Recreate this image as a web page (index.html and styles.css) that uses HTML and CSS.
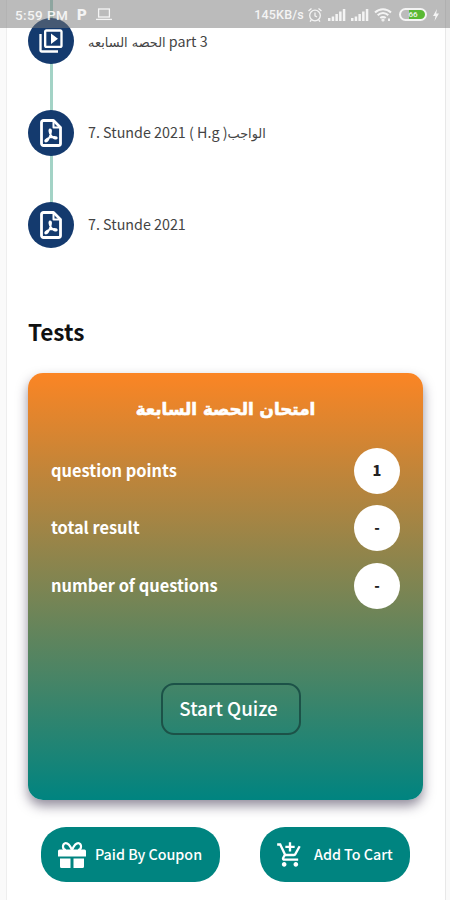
FILE: index.html
```html
<!DOCTYPE html>
<html lang="en">
<head>
    <meta charset="UTF-8">
    <meta name="viewport" content="width=device-width, initial-scale=1">
    <title>7. Stunde 2021</title>
    <link rel="stylesheet" href="styles.css">
</head>
<body>
<header class="status-bar">
    <span class="time">5:59 PM</span>
    <span class="p-icon">P</span>
    <svg class="laptop" width="16" height="13" viewBox="0 0 16 13" fill="none" stroke="#fff" stroke-width="1.3">
        <rect x="2.6" y="1" width="10.8" height="8"/>
        <path d="M0 11.4h16"/>
    </svg>
    <span class="speed">145KB/s</span>
    <svg width="16" height="16" viewBox="0 0 16 16" fill="none" stroke="#fff" stroke-width="1.3">
        <circle cx="8" cy="8.5" r="5.3"/>
        <path d="M8 5.5v3.3l2 1.2M1.5 4l3-2.6M14.5 4l-3-2.6M4.3 13l-1.3 1.7M11.7 13l1.3 1.7"/>
    </svg>
    <svg class="signal" width="18" height="13" viewBox="0 0 18 13" fill="#fff">
        <path d="M0 10h2.5v3H0zM3.7 8.5h2.5V13H3.7zM7.4 6h2.5v7H7.4zM11.1 3.5h2.5V13h-2.5zM14.8 1h2.5v12h-2.5z"/>
    </svg>
    <svg class="signal" width="18" height="13" viewBox="0 0 18 13" fill="#fff">
        <path d="M0 10h2.5v3H0zM3.7 8.5h2.5V13H3.7zM7.4 6h2.5v7H7.4zM11.1 3.5h2.5V13h-2.5zM14.8 1h2.5v12h-2.5z"/>
    </svg>
    <svg class="wifi" width="18" height="15" viewBox="0 0 18 15" fill="none" stroke="#fff" stroke-width="2">
        <path d="M1 5.5c4.5-4.5 11.5-4.5 16 0M3.7 8.3c3-3 7.6-3 10.6 0M6.3 11c1.5-1.5 3.9-1.5 5.4 0"/>
        <circle cx="9" cy="13" r=".6"/>
        <path d="M15 11.5v2.5"/>
    </svg>
    <span class="battery"><span>66</span></span>
    <svg width="6" height="12" viewBox="0 0 6 12" fill="#fff">
        <path d="M4 0 0 7h2.5L1.5 12 6 4.5H3.2z"/>
    </svg>
</header>

<main>
    <ul class="lessons">
        <li>
            <span class="bullet">
                <svg width="28" height="28" viewBox="0 0 24 24" fill="#fff">
                    <path d="M4 6H2v14c0 1.1.9 2 2 2h14v-2H4V6zm16-4H8c-1.1 0-2 .9-2 2v12c0 1.1.9 2 2 2h12c1.1 0 2-.9 2-2V4c0-1.1-.9-2-2-2zm0 14H8V4h12v12zM12 5.5v9l6-4.5z"/>
                </svg>
            </span>
            <p><span class="ar">الحصه السابعه</span> part 3</p>
        </li>
        <li>
            <span class="bullet">
                <svg width="22" height="28" viewBox="0 0 22 28" fill="none" stroke="#fff" stroke-linejoin="round">
                    <path stroke-width="2.8" d="M3.5 1.5h10l7 7v16a2 2 0 0 1-2 2h-15a2 2 0 0 1-2-2v-21a2 2 0 0 1 2-2z"/>
                    <path stroke-width="2" d="M13.5 2v6.5H20"/>
                    <path stroke-width="1.8" d="M10 10.5c1.8 0 .8 3.5.3 5.5-1 3-2.8 6.5-4.5 6.5-1.5 0-.5-2.5 4-4 3-.9 7-1 7 .5 0 1.6-4.3.2-6-3-1.2-2-2-5.5-.8-5.5z"/>
                </svg>
            </span>
            <p>7. Stunde 2021 ( H.g )<span class="ar">الواجب</span></p>
        </li>
        <li>
            <span class="bullet">
                <svg width="22" height="28" viewBox="0 0 22 28" fill="none" stroke="#fff" stroke-linejoin="round">
                    <path stroke-width="2.8" d="M3.5 1.5h10l7 7v16a2 2 0 0 1-2 2h-15a2 2 0 0 1-2-2v-21a2 2 0 0 1 2-2z"/>
                    <path stroke-width="2" d="M13.5 2v6.5H20"/>
                    <path stroke-width="1.8" d="M10 10.5c1.8 0 .8 3.5.3 5.5-1 3-2.8 6.5-4.5 6.5-1.5 0-.5-2.5 4-4 3-.9 7-1 7 .5 0 1.6-4.3.2-6-3-1.2-2-2-5.5-.8-5.5z"/>
                </svg>
            </span>
            <p>7. Stunde 2021</p>
        </li>
    </ul>

    <h2>Tests</h2>
    <section class="quiz-card">
        <h3 dir="rtl">امتحان الحصة السابعة</h3>
        <div class="quiz-row"><span>question points</span><b>1</b></div>
        <div class="quiz-row"><span>total result</span><b>-</b></div>
        <div class="quiz-row"><span>number of questions</span><b>-</b></div>
        <button class="start">Start Quize</button>
    </section>

    <div class="actions">
        <button class="coupon">
            <svg width="28" height="26" viewBox="0 0 28 26" fill="#fff">
                <path d="M1.5 7.5h25q1.5 0 1.5 1.5v5.5H0V9q0-1.5 1.5-1.5zM2 16.5h10.5V26H3.5Q2 26 2 24.5zM15.5 16.5H26v8q0 1.5-1.5 1.5h-9z"/>
                <path fill="none" stroke="#fff" stroke-width="2.2" d="M14 8C12 3.5 10 1.2 7.8 1.2 4 1.2 4 8 8 8M14 8c2-4.5 4-6.8 6.2-6.8C24 1.2 24 8 20 8"/>
            </svg>
            <span>Paid By Coupon</span>
        </button>
        <button class="cart">
            <svg width="28" height="28" viewBox="0 0 24 24" fill="#fff">
                <path d="M11 9h2V6h3V4h-3V1h-2v3H8v2h3v3zm-4 9c-1.1 0-1.99.9-1.99 2S5.9 22 7 22s2-.9 2-2-.9-2-2-2zm10 0c-1.1 0-1.99.9-1.99 2s.89 2 1.99 2 2-.9 2-2-.9-2-2-2zm-9.83-3.25l.03-.12.9-1.63h7.45c.75 0 1.41-.41 1.75-1.03l3.86-7.01L19.42 4h-.01l-1.1 2-2.76 5H8.53l-.13-.27L6.16 6l-.95-2-.94-2H1v2h2l3.6 7.59-1.35 2.45c-.16.28-.25.61-.25.96 0 1.1.9 2 2 2h12v-2H7.42c-.13 0-.25-.11-.25-.25z"/>
            </svg>
            <span>Add To Cart</span>
        </button>
    </div>
</main>
</body>
</html>
```

FILE: styles.css
```css
* {
    box-sizing: border-box;
}
body {
    margin: 0;
    height: 900px;
    overflow: hidden;
    background: #fafafa;
    color: #444;
    font-family: "Noto Sans CJK SC", "DejaVu Sans", sans-serif;
}
h2, h3, p, ul {
    margin: 0;
    padding: 0;
}
button {
    font-family: inherit;
    color: #fff;
    padding: 0;
}
svg {
    display: block;
    flex: none;
}

/* phone status bar, sits over the scrolled page */
.status-bar {
    position: absolute;
    z-index: 2;
    top: 0;
    left: 0;
    width: 450px;
    height: 28px;
    padding: 1px 11px 0 15px;
    display: flex;
    align-items: center;
    background: rgba(120, 120, 120, 0.5);
    color: #fff;
    font-family: Roboto, sans-serif;
    font-size: 13.5px;
    font-weight: 500;
}
.status-bar > * {
    opacity: 0.85;
}
.time {
    width: 62px;
    letter-spacing: 0.4px;
}
.p-icon {
    width: 19px;
    font-size: 15px;
    font-weight: 900;
}
.speed {
    margin-left: auto;
    margin-right: 3px;
    font-size: 12.5px;
    letter-spacing: 0.2px;
}
.signal {
    margin-left: 5px;
}
.wifi {
    margin-left: 5px;
}
.battery {
    width: 28px;
    height: 13px;
    margin: 0 6px 0 7px;
    border: 2px solid #fff;
    border-radius: 7px;
    background: linear-gradient(to right, #bcbcbc 35%, #48b91c 35%);
    display: flex;
    align-items: center;
    justify-content: center;
    font-size: 8px;
}

main {
    height: 900px;
    margin: 0 4px 0 6px;
    padding: 0 22px 0 21px;
    background: #fff;
    border-left: 1px solid #eee;
    border-right: 1px solid #e8e8e8;
}

.lessons {
    list-style: none;
    height: 230px;
    padding-top: 18px;
    background: linear-gradient(#a3d3c6, #a3d3c6) 22px 0 / 3px 220px no-repeat;
}
.lessons li {
    display: flex;
    align-items: center;
    gap: 14px;
    height: 46px;
    margin-bottom: 45.8px;
}
.bullet {
    width: 46px;
    height: 46px;
    border-radius: 50%;
    background: #143a6e;
    display: flex;
    align-items: center;
    justify-content: center;
}
.lessons p {
    padding-bottom: 2px;
    font-size: 14.3px;
    white-space: nowrap;
}
.ar {
    font-family: "DejaVu Sans", sans-serif;
    font-size: 12.9px;
}

h2 {
    margin-top: 84px;
    font-size: 22.6px;
    line-height: 36px;
    color: #111;
}

.quiz-card {
    height: 427px;
    margin-top: 23px;
    padding: 24px 23px 0;
    border-radius: 15px;
    background: linear-gradient(#fb8524, #008480);
    box-shadow: 0 6px 12px rgba(40, 30, 60, 0.5);
    color: #fff;
}
.quiz-card h3 {
    height: 51px;
    line-height: 24px;
    text-align: center;
    font-family: "DejaVu Sans", sans-serif;
    font-size: 16.8px;
    -webkit-text-stroke: 0.6px #fff;
}
.quiz-row {
    display: flex;
    align-items: center;
    justify-content: space-between;
    height: 46px;
    margin-bottom: 11.3px;
    font-size: 16.4px;
    font-weight: bold;
}
.quiz-row span {
    padding-bottom: 2px;
}
.quiz-row b {
    width: 46px;
    height: 46px;
    border-radius: 50%;
    background: #fff;
    color: #222;
    font-size: 14.5px;
    line-height: 43px;
    text-align: center;
}
.start {
    display: block;
    width: 140px;
    height: 52px;
    margin: 74px 0 0 110px;
    padding: 0 5px 2px 0;
    border: 2px solid #1c5248;
    border-radius: 13px;
    background: none;
    font-size: 18.7px;
    font-weight: 500;
}
.quiz-row:nth-of-type(3) {
    margin-bottom: 0;
}

.actions {
    display: flex;
    justify-content: space-between;
    margin: 27px 13px 0;
}
.actions button {
    height: 55px;
    border: 0;
    border-radius: 25px;
    background: #008480;
    display: flex;
    align-items: center;
    font-size: 14.3px;
    font-weight: 500;
    white-space: nowrap;
}
.actions span {
    padding-bottom: 2px;
}
.coupon {
    width: 179px;
    padding-left: 17px;
    gap: 9px;
}
.cart {
    width: 150px;
    padding-left: 16px;
    gap: 10px;
}
```
